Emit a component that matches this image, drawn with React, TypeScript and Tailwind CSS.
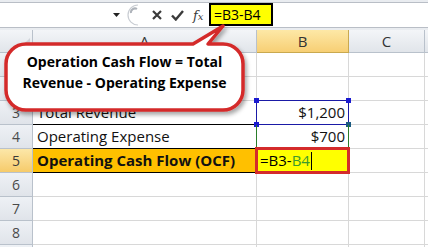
import React from "react";

const rowNums = [1, 2, 3, 4, 5, 6, 7, 8, 9];

function RowHeader({ n, active }: { n: number; active?: boolean }) {
  return (
    <div
      className={
        "h-[24px] flex items-center justify-center border-r border-b border-[#b9c1cb] text-[14px] " +
        (active
          ? "bg-gradient-to-b from-[#fce7a8] to-[#f6cb6a] text-[#3a3a3a]"
          : "bg-gradient-to-b from-[#eef1f5] to-[#e0e4ea] text-[#4a4a4a]")
      }
    >
      {n < 9 ? n : ""}
    </div>
  );
}

function Cell({ className = "", children }: { className?: string; children?: React.ReactNode }) {
  return (
    <div className={"h-[24px] border-r border-b border-[#d8d8d8] flex items-center text-[15px] text-[#111] " + className}>
      {children}
    </div>
  );
}

export default function App() {
  return (
    <div className="relative w-[428px] h-[247px] overflow-hidden bg-white font-['Open_Sans',sans-serif]">
      {/* Formula bar */}
      <div className="h-[30px] bg-[#e9ecf0] pt-[2px]">
        <div className="h-[26px] flex bg-white border-y border-[#b9bec6]">
          <div className="w-[124px] flex items-center justify-end pr-[4px]">
            <svg width="7" height="4" viewBox="0 0 7 4">
              <path d="M0 0 L7 0 L3.5 4 Z" fill="#222" />
            </svg>
          </div>
          <div className="w-[86px] flex items-center">
            <svg width="14" height="22" viewBox="0 0 14 22" className="ml-[1px]">
              <path d="M13 1 A10 10 0 0 0 13 21" fill="none" stroke="#c9cdd3" strokeWidth="1.2" />
              <path d="M12 5 A4 4 0 0 0 6 9" fill="none" stroke="#aeb3ba" strokeWidth="2" />
            </svg>
            <svg width="10" height="10" viewBox="0 0 10 10" className="ml-[13px]">
              <path d="M1 1 L9 9 M9 1 L1 9" stroke="#3a3a3a" strokeWidth="2.2" />
            </svg>
            <svg width="13" height="11" viewBox="0 0 13 11" className="ml-[9px]">
              <path d="M1 5.5 L4.8 9.5 L12 1" fill="none" stroke="#3a3a3a" strokeWidth="2.4" />
            </svg>
            <span className="ml-[9px] font-['DejaVu_Serif',serif] italic text-[13px] text-[#3a3a3a] leading-none">
              f<span className="text-[10px]">x</span>
            </span>
          </div>
          <div className="flex-1">
            <div className="-ml-[1px] h-[23px] w-[64px] border-2 border-black bg-[#ffff00] flex items-center pl-[3px] text-[14px] text-black">
              =B3-B4
            </div>
          </div>
        </div>
      </div>

      {/* Grid */}
      <div className="grid grid-cols-[33px_224px_92px_76px_1fr]">
        <div className="h-[23px] relative bg-gradient-to-b from-[#f3f5f8] to-[#e1e5ea] border-r border-b border-[#b9c1cb]">
          <svg width="12" height="12" viewBox="0 0 12 12" className="absolute right-[2px] bottom-[2px]">
            <path d="M12 0 L12 12 L0 12 Z" fill="#cfd4da" />
          </svg>
        </div>
        <div className="h-[23px] flex items-center justify-center bg-gradient-to-b from-[#f3f5f8] to-[#e1e5ea] border-r border-b border-[#b9c1cb] text-[15px] text-[#333]">
          A
        </div>
        <div className="h-[23px] flex items-center justify-center bg-gradient-to-b from-[#fde8a6] to-[#f7cf74] border-r border-b border-[#c9a94f] text-[15px] text-[#333]">
          B
        </div>
        <div className="h-[23px] flex items-center justify-center bg-gradient-to-b from-[#f3f5f8] to-[#e1e5ea] border-r border-b border-[#b9c1cb] text-[15px] text-[#333]">
          C
        </div>
        <div className="h-[23px] bg-gradient-to-b from-[#f3f5f8] to-[#e1e5ea] border-b border-[#b9c1cb]" />

        {rowNums.map((n) => (
          <React.Fragment key={n}>
            <RowHeader n={n} active={n === 5} />
            {n === 3 ? (
              <Cell className="pl-[4px] border-b-black">Total Revenue</Cell>
            ) : n === 4 ? (
              <Cell className="pl-[4px] border-b-black">Operating Expense</Cell>
            ) : n === 5 ? (
              <Cell className="pl-[4px] bg-[#ffc000] font-bold border-b-black">Operating Cash Flow (OCF)</Cell>
            ) : (
              <Cell />
            )}
            {n === 3 ? (
              <Cell className="relative justify-end pr-[3px]">
                $1,200
                <div className="absolute -left-px -top-px -right-px -bottom-px border border-[#1a1aa6]" />
                <div className="absolute -left-[3px] -top-[3px] w-[5px] h-[5px] bg-[#1a1ad0]" />
                <div className="absolute -right-[3px] -top-[3px] w-[5px] h-[5px] bg-[#1a1ad0]" />
                <div className="absolute -left-[3px] -bottom-[3px] w-[5px] h-[5px] bg-[#1a1ad0]" />
                <div className="absolute -right-[3px] -bottom-[3px] w-[5px] h-[5px] bg-[#1a5a80]" />
              </Cell>
            ) : n === 4 ? (
              <Cell className="relative justify-end pr-[3px]">
                $700
                <div className="absolute -left-px top-0 -bottom-px w-px bg-[#2a7d2a]" />
                <div className="absolute -right-px top-0 -bottom-px w-px bg-[#2a7d2a]" />
              </Cell>
            ) : n === 5 ? (
              <Cell className="relative bg-[#ffff00] pl-[3px]">
                <span className="text-black">=B3-</span>
                <span className="text-[#3d9a2e]">B4</span>
                <span className="ml-[1px] w-px h-[18px] bg-black" />
                <div className="absolute -left-[2px] -top-[2px] -right-[2px] -bottom-[2px] border-[3px] border-[#d42b2b]" />
              </Cell>
            ) : (
              <Cell />
            )}
            <Cell />
            <Cell className="border-r-0" />
          </React.Fragment>
        ))}
      </div>

      {/* Callout */}
      <svg width="428" height="247" viewBox="0 0 428 247" className="absolute left-0 top-0 pointer-events-none">
        <defs>
          <filter id="sh" x="-10%" y="-10%" width="130%" height="140%">
            <feDropShadow dx="2" dy="3" stdDeviation="2" floodColor="#000" floodOpacity="0.35" />
          </filter>
        </defs>
        <path
          d="M26 44 L193 44 L223 26 L208 44 L223 44 A20 20 0 0 1 243 64 L243 90 A20 20 0 0 1 223 110 L26 110 A20 20 0 0 1 6 90 L6 64 A20 20 0 0 1 26 44 Z"
          fill="#ffffff"
          stroke="#d42b2b"
          strokeWidth="3.5"
          strokeLinejoin="round"
          filter="url(#sh)"
        />
      </svg>
      <div className="absolute left-[6px] top-[51px] w-[237px] text-center font-bold text-[14px] leading-[21px] text-black">
        <div>Operation Cash Flow = Total</div>
        <div>Revenue - Operating Expense</div>
      </div>
    </div>
  );
}
